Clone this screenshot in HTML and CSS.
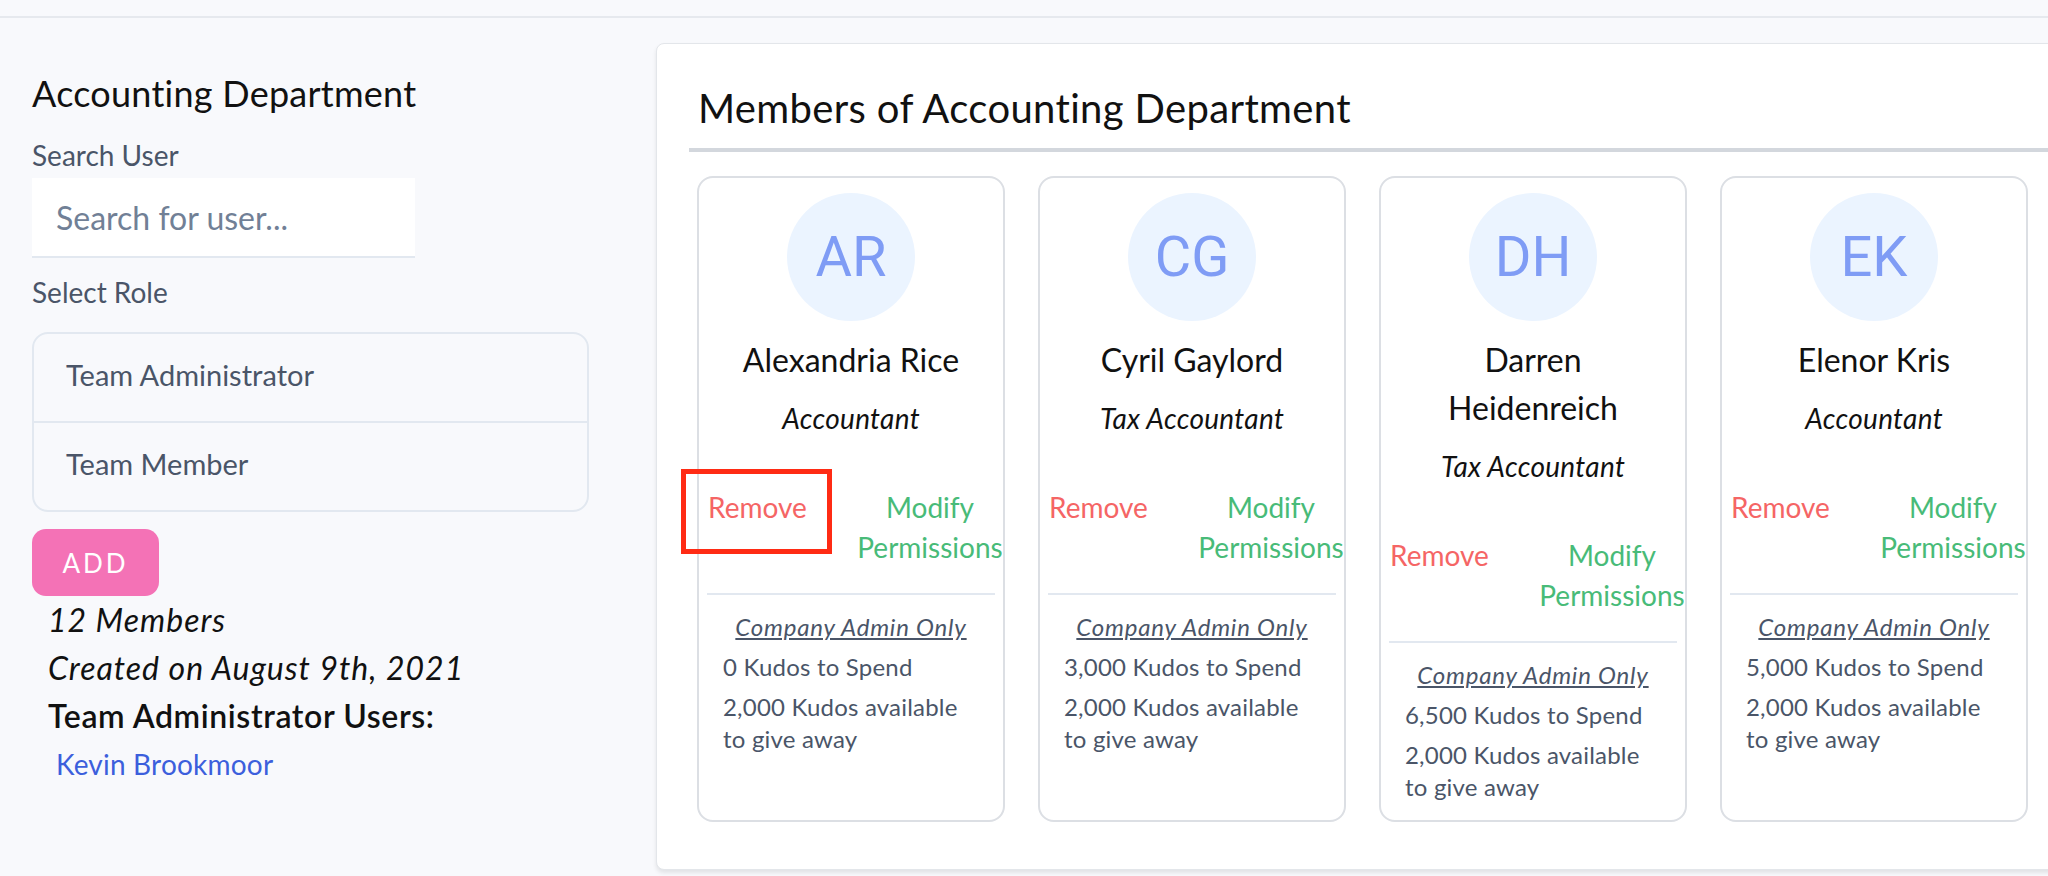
FILE: index.html
```html
<!DOCTYPE html>
<html lang="en">
<head>
<meta charset="utf-8">
<title>Accounting Department</title>
<link rel="stylesheet" href="styles.css">
</head>
<body>
<div class="topbar"></div>
<main class="layout">
  <aside class="sidebar">
    <h2 class="dept-title">Accounting Department</h2>
    <label class="field-label">Search User</label>
    <input class="search-input" type="text" placeholder="Search for user...">
    <label class="field-label role-label">Select Role</label>
    <ul class="role-list">
      <li class="role-item">Team Administrator</li>
      <li class="role-item">Team Member</li>
    </ul>
    <button class="add-btn">ADD</button>
    <div class="dept-meta">
      <p class="meta-italic">12 Members</p>
      <p class="meta-italic">Created on August 9th, 2021</p>
      <p class="meta-strong">Team Administrator Users:</p>
      <a class="admin-link">Kevin Brookmoor</a>
    </div>
  </aside>

  <section class="members-panel">
    <h1 class="panel-title">Members of Accounting Department</h1>
    <div class="card-grid">
      <div class="member-card">
        <div class="avatar">AR</div>
        <div class="member-name">Alexandria Rice</div>
        <div class="member-role">Accountant</div>
        <div class="actions">
          <button class="btn-remove">Remove</button>
          <button class="btn-modify">Modify Permissions</button>
        </div>
        <div class="divider"></div>
        <div class="admin-info">
          <div class="admin-only">Company Admin Only</div>
          <p class="kudos">0 Kudos to Spend</p>
          <p class="kudos">2,000 Kudos available to give away</p>
        </div>
      </div>
      <div class="member-card">
        <div class="avatar">CG</div>
        <div class="member-name">Cyril Gaylord</div>
        <div class="member-role">Tax Accountant</div>
        <div class="actions">
          <button class="btn-remove">Remove</button>
          <button class="btn-modify">Modify Permissions</button>
        </div>
        <div class="divider"></div>
        <div class="admin-info">
          <div class="admin-only">Company Admin Only</div>
          <p class="kudos">3,000 Kudos to Spend</p>
          <p class="kudos">2,000 Kudos available to give away</p>
        </div>
      </div>
      <div class="member-card">
        <div class="avatar">DH</div>
        <div class="member-name">Darren Heidenreich</div>
        <div class="member-role">Tax Accountant</div>
        <div class="actions">
          <button class="btn-remove">Remove</button>
          <button class="btn-modify">Modify Permissions</button>
        </div>
        <div class="divider"></div>
        <div class="admin-info">
          <div class="admin-only">Company Admin Only</div>
          <p class="kudos">6,500 Kudos to Spend</p>
          <p class="kudos">2,000 Kudos available to give away</p>
        </div>
      </div>
      <div class="member-card">
        <div class="avatar">EK</div>
        <div class="member-name">Elenor Kris</div>
        <div class="member-role">Accountant</div>
        <div class="actions">
          <button class="btn-remove">Remove</button>
          <button class="btn-modify">Modify Permissions</button>
        </div>
        <div class="divider"></div>
        <div class="admin-info">
          <div class="admin-only">Company Admin Only</div>
          <p class="kudos">5,000 Kudos to Spend</p>
          <p class="kudos">2,000 Kudos available to give away</p>
        </div>
      </div>
      <div class="highlight-box"></div>
    </div>
  </section>
</main>
</body>
</html>
```

FILE: styles.css
```css
* { box-sizing: border-box; }

html, body {
  margin: 0;
  padding: 0;
}

body {
  background: #f8f9fc;
  font-family: "Lato", "Open Sans", sans-serif;
  color: #1a202c;
  width: 2048px;
  height: 876px;
  overflow: hidden;
}

.topbar {
  height: 18px;
  border-bottom: 2px solid #e6e9ee;
}

.layout {
  display: flex;
  align-items: flex-start;
}

/* ---------- sidebar ---------- */
.sidebar {
  flex: none;
  width: 656px;
  padding: 47px 67px 0 32px;
}

.dept-title {
  margin: 0;
  font-size: 36px;
  line-height: 56px;
  font-weight: 400;
  letter-spacing: 0.25px;
  color: #111;
}

.field-label {
  display: block;
  margin-top: 14px;
  font-size: 28px;
  line-height: 40px;
  color: #4a5568;
}

.search-input {
  display: block;
  margin-top: 3px;
  width: 383px;
  height: 80px;
  padding: 0 24px;
  border: none;
  border-bottom: 2px solid #e2e8f0;
  background: #fff;
  font-family: inherit;
  font-size: 32px;
  color: #4a5568;
  outline: none;
}

.search-input::placeholder { color: #718096; }

.role-label { margin-top: 14px; }

.role-list {
  list-style: none;
  margin: 20px 0 0;
  padding: 0;
  width: 557px;
  border: 2px solid #e2e8f0;
  border-radius: 16px;
}

.role-item {
  padding: 17px 32px 22px;
  font-size: 29px;
  line-height: 48px;
  color: #4a5568;
}

.role-item + .role-item { border-top: 2px solid #e2e8f0; }

.add-btn {
  display: block;
  margin-top: 17px;
  width: 127px;
  height: 67px;
  padding: 0;
  border: none;
  border-radius: 14px;
  background: #f472b6;
  color: #fff;
  font-family: inherit;
  font-size: 26px;
  letter-spacing: 3px;
}

.dept-meta {
  padding-left: 16px;
}

.dept-meta p {
  margin: 0;
  font-size: 32px;
  line-height: 48px;
}

.meta-italic {
  font-style: italic;
  letter-spacing: 1px;
  color: #111;
}

.meta-strong {
  font-weight: 600;
  letter-spacing: 0.6px;
  color: #111;
}

.admin-link {
  display: block;
  margin-top: 4px;
  padding-left: 8px;
  font-size: 28px;
  line-height: 40px;
  letter-spacing: 0.2px;
  color: #3c5fdc;
}

/* ---------- members panel ---------- */
.members-panel {
  flex: none;
  margin-top: 25px;
  width: 1480px;
  padding: 36px 32px 47px;
  background: #fff;
  border: 1px solid #e3e6ea;
  border-radius: 8px;
  box-shadow: 0 3px 4px rgba(0, 0, 0, 0.09);
}

.panel-title {
  margin: 0;
  padding: 0 0 12px 9px;
  border-bottom: 4px solid #d3d7dd;
  font-size: 40px;
  line-height: 56px;
  font-weight: 400;
  letter-spacing: 0.35px;
  color: #111;
}

.card-grid {
  position: relative;
  margin: 24px 0 0 8px;
  display: grid;
  grid-template-columns: repeat(4, 308px);
  column-gap: 33px;
  align-items: stretch;
}

.member-card {
  display: flex;
  flex-direction: column;
  align-items: center;
  padding: 15px 8px 17px;
  border: 2px solid #dcdfe4;
  border-radius: 16px;
  overflow: hidden;
  text-align: center;
}

.avatar {
  flex: none;
  width: 128px;
  height: 128px;
  border-radius: 50%;
  background: #ebf4ff;
  color: #7f9cf5;
  display: flex;
  align-items: center;
  justify-content: center;
  font-family: "Roboto", "Liberation Sans", sans-serif;
  font-size: 56px;
}

.member-name {
  margin-top: 15px;
  padding: 0 16px;
  font-size: 32px;
  line-height: 48px;
  color: #111;
}

.member-role {
  margin-top: 14px;
  font-size: 28px;
  line-height: 40px;
  font-style: italic;
  letter-spacing: 0.3px;
  color: #111;
}

.actions {
  margin-top: 49px;
  width: 100%;
  display: flex;
  justify-content: space-between;
  align-items: flex-start;
}

.actions button {
  padding: 0;
  border: none;
  background: none;
  font-family: inherit;
  font-size: 28px;
  line-height: 40px;
}

.btn-remove {
  margin-left: 1px;
  color: #f56565;
}

.btn-modify {
  width: 150px;
  margin-right: -10px;
  text-align: center;
  color: #48bb78;
}

.divider {
  margin-top: 26px;
  width: 100%;
  height: 2px;
  background: #e2e8f0;
}

.admin-info {
  margin-top: 16px;
  width: 100%;
  padding: 0 16px;
  text-align: left;
  color: #4a5568;
}

.admin-only {
  text-align: center;
  font-size: 24px;
  line-height: 32px;
  font-style: italic;
  letter-spacing: 0.8px;
  text-decoration: underline;
}

.kudos {
  margin: 8px 0 0;
  font-size: 24px;
  line-height: 32px;
  letter-spacing: 0.2px;
}

.highlight-box {
  position: absolute;
  left: -16px;
  top: 293px;
  width: 151px;
  height: 85px;
  border: 5px solid #ff2b14;
}
```
